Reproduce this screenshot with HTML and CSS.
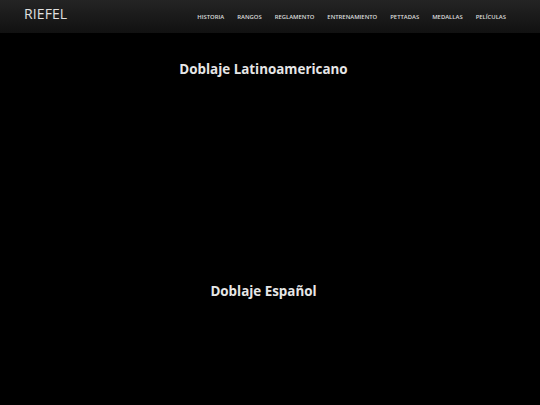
FILE: index.html
```html
<!DOCTYPE html>
<html lang="es">
<head>
<meta charset="utf-8">
<title>Riefel</title>
<link rel="stylesheet" href="styles.css">
</head>
<body>
<header class="navbar">
  <a class="brand" href="#">RIEFEL</a>
  <nav class="menu">
    <a href="#">HISTORIA</a>
    <a href="#">RANGOS</a>
    <a href="#">REGLAMENTO</a>
    <a href="#">ENTRENAMIENTO</a>
    <a href="#">PETTADAS</a>
    <a href="#">MEDALLAS</a>
    <a href="#">PELÍCULAS</a>
  </nav>
</header>
<main class="content">
  <section class="block">
    <h2 class="title">Doblaje Latinoamericano</h2>
    <div class="video"></div>
  </section>
  <section class="block">
    <h2 class="title">Doblaje Español</h2>
    <div class="video"></div>
  </section>
</main>
</body>
</html>
```

FILE: styles.css
```css
html, body {
  margin: 0;
  padding: 0;
  background: #000;
  font-family: "Open Sans", "Liberation Sans", sans-serif;
}
.navbar {
  height: 33px;
  display: flex;
  align-items: center;
  justify-content: space-between;
  padding: 0 34px 0 24px;
  background: linear-gradient(to bottom, #242424, #111111);
  box-sizing: border-box;
}
.brand {
  color: #e0e0e0;
  font-size: 14px;
  text-decoration: none;
  letter-spacing: 0.1px;
  margin-top: -7px;
}
.menu {
  display: flex;
  gap: 13px;
  margin-top: 1px;
}
.menu a {
  color: #dcdcdc;
  font-size: 5.9px;
  font-weight: 600;
  text-decoration: none;
}
.content {
  margin-right: 13px;
}
.block {
  display: flex;
  flex-direction: column;
  align-items: center;
}
.title {
  margin: 26px 0 0;
  color: #e6e6e6;
  font-size: 13.4px;
  font-weight: 700;
  line-height: 20px;
}
.video {
  width: 100%;
  height: 176px;
}
```
